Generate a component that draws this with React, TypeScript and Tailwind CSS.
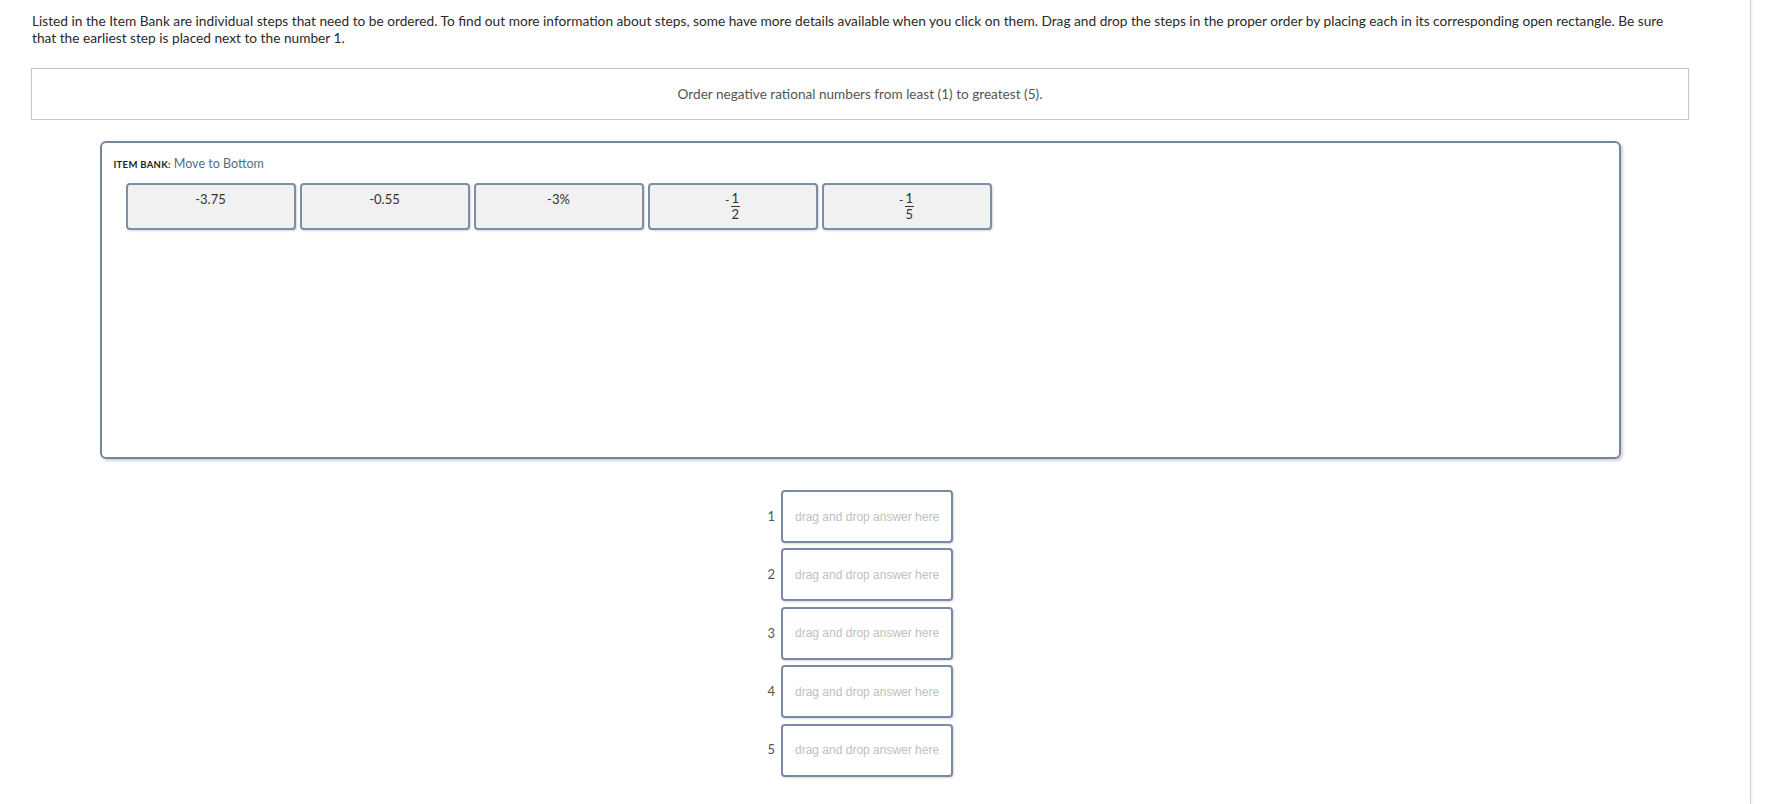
import React from "react";

const font = { fontFamily: "Lato, 'Liberation Sans', sans-serif" };

function Frac({ d }: { d: string }) {
  return (
    <span className="flex items-center">
      <span className="block text-[12px] leading-[12px] mr-[1px] mb-[14px]">-</span>
      <span className="flex flex-col items-center">
        <span className="block h-[13px] text-[13px] leading-[13px] px-[1px]">1</span>
        <span className="block h-px w-[9px] bg-[#333] my-[1px]" />
        <span className="block h-[13px] text-[13px] leading-[13px] px-[1px]">{d}</span>
      </span>
    </span>
  );
}

function Item({ children }: { children: React.ReactNode }) {
  return (
    <div className="w-[170px] border-2 border-[#7f8ea4] rounded-[4px] bg-[#f1f1f1] shadow-[1px_1px_2px_rgba(0,0,0,0.15)] pt-[7px] pb-[7px] flex justify-center items-start text-[13px] leading-[15px] text-[#333]">
      {children}
    </div>
  );
}

export default function App() {
  const items: React.ReactNode[] = [
    "-3.75",
    "-0.55",
    "-3%",
    <Frac d="2" key="a" />,
    <Frac d="5" key="b" />,
  ];
  return (
    <div className="w-[1788px] h-[804px] bg-white flex overflow-hidden" style={font}>
      <div className="w-[1751px] h-[804px] border-r border-[#cfcfcf] shadow-[1px_0_3px_rgba(0,0,0,0.08)] flex flex-col">
        <div className="ml-[31px] w-[1658px] flex flex-col">
          <p className="pt-[12px] pl-[1px] text-[13.7px] leading-[17px] text-[#2a2a2a]">
            Listed in the Item Bank are individual steps that need to be ordered. To find out more information about steps, some have more details available when you click on them. Drag and drop the steps in the proper order by placing each in its corresponding open rectangle. Be sure
            <br />
            that the earliest step is placed next to the number 1.
          </p>

          <div className="mt-[22px] h-[52px] border border-[#c4c4c4] flex items-center justify-center text-[13.6px] text-[#555]">
            Order negative rational numbers from least (1) to greatest (5).
          </div>

          <div className="mt-[21px] mx-auto w-[1521px] h-[318px] border-2 border-[#74869c] rounded-[6px] shadow-[2px_2px_3px_rgba(0,0,0,0.18)] pt-[14px] px-[12px]">
            <div className="flex items-baseline leading-[14px]">
              <span className="text-[9.5px] font-bold text-[#222] tracking-[0.3px]">ITEM BANK:</span>
              <span className="ml-[3px] text-[12.5px] text-[#4d7083]">Move to Bottom</span>
            </div>
            <div className="mt-[11px] ml-[12px] flex gap-[4px]">
              {items.map((it, i) => (
                <Item key={i}>{it}</Item>
              ))}
            </div>
          </div>

          <div className="mt-[31px] pl-[734px] flex flex-col gap-[5.4px]">
            {[1, 2, 3, 4, 5].map((n) => (
              <div key={n} className="flex items-center">
                <span className="w-[10px] text-right text-[13px] text-[#555] mr-[6px]">{n}</span>
                <div
                  className="w-[172px] h-[53px] border-2 border-[#7a89a5] rounded-[4px] bg-white shadow-[1px_1px_2px_rgba(0,0,0,0.15)] flex items-center pl-[12px] text-[12px] text-[#c0c0c0]"
                  style={{ fontFamily: "'Liberation Sans', Arial, sans-serif" }}
                >
                  drag and drop answer here
                </div>
              </div>
            ))}
          </div>
        </div>
      </div>
    </div>
  );
}
